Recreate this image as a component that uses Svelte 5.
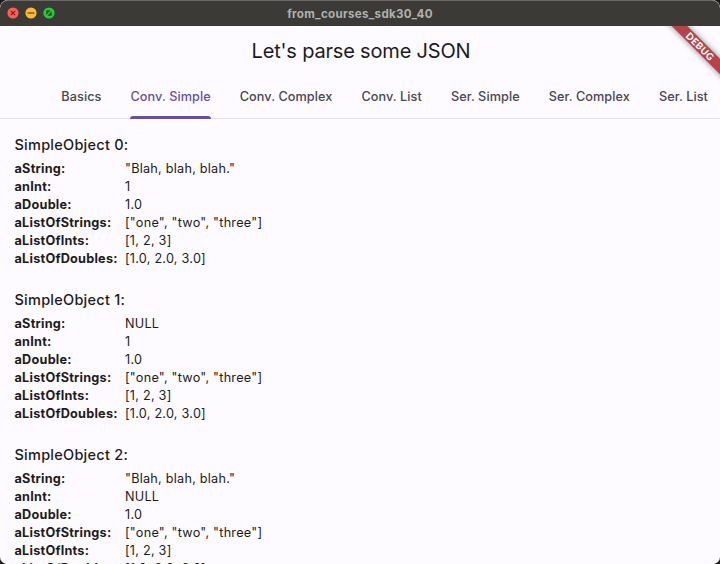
<script>
  const tabs = ['Basics', 'Conv. Simple', 'Conv. Complex', 'Conv. List', 'Ser. Simple', 'Ser. Complex', 'Ser. List'];
  const active = 'Conv. Simple';

  const rows = (aString, anInt) => [
    ['aString:', aString],
    ['anInt:', anInt],
    ['aDouble:', '1.0'],
    ['aListOfStrings:', '["one", "two", "three"]'],
    ['aListOfInts:', '[1, 2, 3]'],
    ['aListOfDoubles:', '[1.0, 2.0, 3.0]']
  ];

  const objects = [
    rows('"Blah, blah, blah."', '1'),
    rows('NULL', '1'),
    rows('"Blah, blah, blah."', 'NULL')
  ];
</script>

<div class="desktop">
  <div class="window">
    <header class="titlebar">
      <div class="lights">
        <svg viewBox="0 0 12 12"><circle cx="6" cy="6" r="5.6" fill="#fb5f5b" /><path d="M3.8 3.8l4.4 4.4M8.2 3.8l-4.4 4.4" stroke="#97100f" stroke-width="1.2" /></svg>
        <svg viewBox="0 0 12 12"><circle cx="6" cy="6" r="5.6" fill="#fcbb36" /><path d="M2.5 6h7" stroke="#945a0b" stroke-width="1.3" /></svg>
        <svg viewBox="0 0 12 12"><circle cx="6" cy="6" r="5.6" fill="#2bc840" /><path d="M3.2 7.9V3.3h4.6zM8.8 4.2v4.6H4.2z" fill="#0a6415" /></svg>
      </div>
      <span class="name">from_courses_sdk30_40</span>
    </header>

    <main>
      <div class="banner"><span>DEBUG</span></div>
      <h1><span>Let's parse some JSON</span></h1>
      <nav>
        {#each tabs as tab}
          <button class:active={tab === active}>{tab}</button>
        {/each}
      </nav>
      <div class="content">
        {#each objects as fields, i}
          <section>
            <h2>SimpleObject {i}:</h2>
            {#each fields as [key, value]}
              <div class="row"><b>{key}</b><span>{value}</span></div>
            {/each}
          </section>
        {/each}
      </div>
    </main>
  </div>
</div>

<style>
  .desktop {
    width: 720px;
    height: 564px;
    background: #1b1a1a;
    overflow: hidden;
    font-family: Inter, 'Liberation Sans', sans-serif;
    color: #1d1b20;
  }
  .window {
    display: flex;
    flex-direction: column;
    height: 564px;
    border-radius: 8px 8px 7px 7px;
    overflow: hidden;
    background: #fdfbff;
  }
  .titlebar {
    display: grid;
    grid-template-columns: 1fr auto 1fr;
    align-items: center;
    height: 26px;
    flex: none;
    box-sizing: border-box;
    background: #3b3a36;
    border-top: 1px solid #6b6a67;
    border-radius: 8px 8px 0 0;
  }
  .lights {
    display: flex;
    gap: 6px;
    padding-left: 6.5px;
    margin-top: -1px;
  }
  .lights svg {
    width: 12px;
    height: 12px;
  }
  .name {
    font-size: 11.6px;
    line-height: 24px;
    font-weight: 700;
    color: #b1b0ae;
    letter-spacing: 0.3px;
  }
  main {
    position: relative;
    flex: 1;
    overflow: hidden;
  }
  h1 {
    margin: 0;
    height: 50px;
    line-height: 50px;
    padding-left: 2px;
    text-align: center;
    font-size: 20px;
    font-weight: 400;
    letter-spacing: -0.18px;
  }
  nav {
    display: flex;
    gap: 29px;
    height: 43px;
    box-sizing: border-box;
    padding-left: 61.3px;
    border-bottom: 1px solid #e4e0e8;
    white-space: nowrap;
  }
  button {
    position: relative;
    flex: none;
    height: 43px;
    padding: 0 0 1px;
    border: 0;
    background: none;
    font: 500 12.7px/42px Inter, 'Liberation Sans', sans-serif;
    letter-spacing: 0.07px;
    color: #49454f;
  }
  .active {
    color: #6750a4;
  }
  .active::after {
    content: '';
    position: absolute;
    left: 0;
    right: 0;
    bottom: 0;
    height: 3px;
    border-radius: 3px 3px 0 0;
    background: #6750a4;
  }
  .content {
    padding: 15px 14.5px 0;
  }
  section {
    height: 155px;
  }
  h2 {
    margin: 0;
    height: 26px;
    line-height: 22px;
    font-size: 14.5px;
    font-weight: 500;
    letter-spacing: 0.25px;
  }
  .row {
    display: grid;
    grid-template-columns: 110.5px auto;
    height: 18px;
    line-height: 18px;
    font-size: 12.7px;
    letter-spacing: 0.23px;
    white-space: nowrap;
  }
  .banner {
    position: absolute;
    right: -50px;
    top: 15px;
    width: 140px;
    height: 11px;
    transform: rotate(45deg);
    background: #b5444a;
    box-shadow: 0 0 6px #0007;
    color: #fff;
    text-align: center;
    font-family: Lato, sans-serif;
    font-size: 9.6px;
    line-height: 11px;
    font-weight: 900;
    letter-spacing: 0.4px;
  }
</style>
